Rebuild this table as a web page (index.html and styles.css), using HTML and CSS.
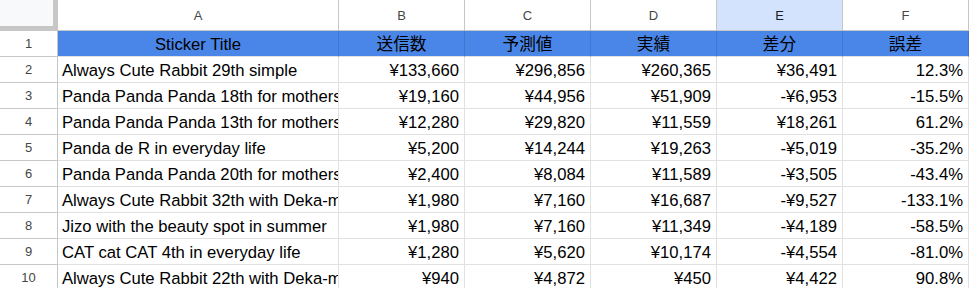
FILE: index.html
```html
<!DOCTYPE html>
<html lang="ja">
<head>
<meta charset="utf-8">
<title>Sheet</title>
<link rel="stylesheet" href="styles.css">
</head>
<body>
<div class="sheet">
  <div class="corner"></div>
  <div class="colh">A</div>
  <div class="colh">B</div>
  <div class="colh">C</div>
  <div class="colh">D</div>
  <div class="colh sel">E</div>
  <div class="colh">F</div>

  <div class="rowh">1</div>
  <div class="hd">Sticker Title</div>
  <div class="hd">送信数</div>
  <div class="hd">予測値</div>
  <div class="hd">実績</div>
  <div class="hd">差分</div>
  <div class="hd">誤差</div>

  <div class="rowh">2</div>
  <div class="c t">Always Cute Rabbit 29th simple</div>
  <div class="c n">¥133,660</div><div class="c n">¥296,856</div><div class="c n">¥260,365</div><div class="c n">¥36,491</div><div class="c n">12.3%</div>

  <div class="rowh">3</div>
  <div class="c t">Panda Panda Panda 18th for mothers</div>
  <div class="c n">¥19,160</div><div class="c n">¥44,956</div><div class="c n">¥51,909</div><div class="c n">-¥6,953</div><div class="c n">-15.5%</div>

  <div class="rowh">4</div>
  <div class="c t">Panda Panda Panda 13th for mothers</div>
  <div class="c n">¥12,280</div><div class="c n">¥29,820</div><div class="c n">¥11,559</div><div class="c n">¥18,261</div><div class="c n">61.2%</div>

  <div class="rowh">5</div>
  <div class="c t">Panda de R in everyday life</div>
  <div class="c n">¥5,200</div><div class="c n">¥14,244</div><div class="c n">¥19,263</div><div class="c n">-¥5,019</div><div class="c n">-35.2%</div>

  <div class="rowh">6</div>
  <div class="c t">Panda Panda Panda 20th for mothers</div>
  <div class="c n">¥2,400</div><div class="c n">¥8,084</div><div class="c n">¥11,589</div><div class="c n">-¥3,505</div><div class="c n">-43.4%</div>

  <div class="rowh">7</div>
  <div class="c t">Always Cute Rabbit 32th with Deka-moji</div>
  <div class="c n">¥1,980</div><div class="c n">¥7,160</div><div class="c n">¥16,687</div><div class="c n">-¥9,527</div><div class="c n">-133.1%</div>

  <div class="rowh">8</div>
  <div class="c t">Jizo with the beauty spot in summer</div>
  <div class="c n">¥1,980</div><div class="c n">¥7,160</div><div class="c n">¥11,349</div><div class="c n">-¥4,189</div><div class="c n">-58.5%</div>

  <div class="rowh">9</div>
  <div class="c t">CAT cat CAT 4th in everyday life</div>
  <div class="c n">¥1,280</div><div class="c n">¥5,620</div><div class="c n">¥10,174</div><div class="c n">-¥4,554</div><div class="c n">-81.0%</div>

  <div class="rowh">10</div>
  <div class="c t">Always Cute Rabbit 22th with Deka-moji</div>
  <div class="c n">¥940</div><div class="c n">¥4,872</div><div class="c n">¥450</div><div class="c n">¥4,422</div><div class="c n">90.8%</div>
</div>
</body>
</html>
```

FILE: styles.css
```css
html, body {
  margin: 0;
  padding: 0;
  background: #ffffff;
  overflow: hidden;
}

.sheet {
  display: grid;
  grid-template-columns: 58px 281px repeat(5, 126px);
  grid-template-rows: 31px;
  grid-auto-rows: 26px;
  font-family: "Liberation Sans", Arial, "Noto Sans CJK JP", sans-serif;
  color: #000000;
}

.sheet > div {
  box-sizing: border-box;
  border-right: 1px solid #e1e1e1;
  border-bottom: 1px solid #e1e1e1;
  overflow: hidden;
  white-space: nowrap;
}

.corner {
  background: #f8f9fa;
  border-right: 5px solid #c7c7c7 !important;
  border-bottom: 5px solid #c7c7c7 !important;
}

.colh {
  font-size: 13px;
  color: #444746;
  text-align: center;
  line-height: 29px;
  padding-top: 1px;
  background: #ffffff;
  border-right-color: #c4c7c5 !important;
  border-bottom-color: #c4c7c5 !important;
}

.colh.sel {
  background: #d3e3fd;
  color: #1f1f1f;
}

.rowh {
  font-size: 13px;
  color: #444746;
  text-align: center;
  line-height: 25px;
  background: #ffffff;
  border-right-color: #c4c7c5 !important;
  border-bottom-color: #c4c7c5 !important;
}

.hd {
  background: #4a86e8;
  font-size: 16.67px;
  text-align: center;
  line-height: 23px;
  padding-top: 2px;
  border-right-color: #3f76cf !important;
  border-bottom-color: #e1e1e1;
}

.c {
  font-size: 16.67px;
  line-height: 23px;
  padding: 2px 4px 0 4px;
}

.t {
  text-align: left;
  text-overflow: clip;
}

.n {
  text-align: right;
  padding-right: 5px;
}
```
